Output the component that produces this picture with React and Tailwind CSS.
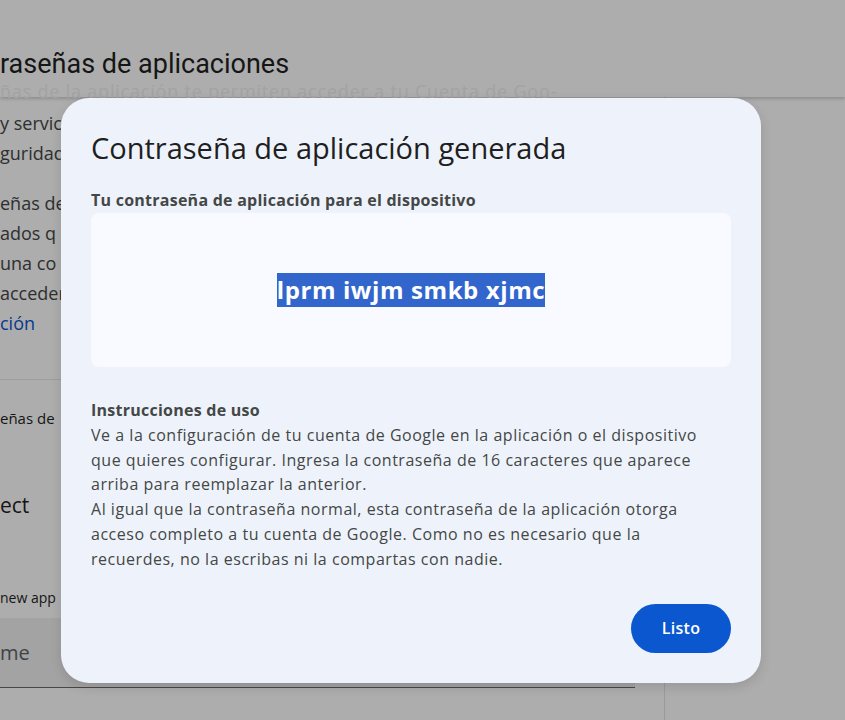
import React from 'react';

const App = () => {
  return (
    <div className="relative w-[845px] h-[720px] overflow-hidden bg-white font-['Roboto',sans-serif]">
      {/* Page behind the dialog */}
      <div className="flex flex-col h-full">
        {/* Header */}
        <div className="relative z-10 h-[97px] shrink-0 bg-white/90 shadow-[0_2px_3px_rgba(0,0,0,0.18)]">
          <div className="pt-[47px] text-[27px] leading-[34px] text-[#1f1f1f] whitespace-nowrap">
            raseñas de aplicaciones
          </div>
          <div className="text-[18px] leading-[20px] tracking-[0.8px] text-[#f0f0f0] whitespace-nowrap font-['Open_Sans',sans-serif]">
            ñas de la aplicación te permiten acceder a tu Cuenta de Goo-
          </div>
        </div>

        <div className="flex flex-1">
          <div className="w-[665px] border-r border-[#e3e3e3]">
            <div className="w-[635px] text-[18px] leading-[30px] text-[#444746] whitespace-nowrap font-['Open_Sans',sans-serif]">
              <div className="mt-[11px]">
                <div>y servic</div>
                <div>guridad</div>
              </div>
              <div className="mt-[20px]">
                <div>eñas de</div>
                <div>ados q</div>
                <div>una co</div>
                <div>acceder</div>
                <div className="text-[#0b57d0]">ción</div>
              </div>

              <div className="mt-[41px] border-t border-[#e8e8e8]" />

              <div className="mt-[28px] text-[15px] leading-[20px] text-[#1f1f1f]">eñas de</div>
              <div className="mt-[65px] text-[21px] leading-[24px] text-[#1f1f1f]">ect</div>
              <div className="mt-[71px] text-[14px] leading-[20px] text-[#1f1f1f]">new app</div>
              <div className="mt-[10px] h-[70px] bg-[#f0f0f0] border-b border-[#6b6b6b] flex items-center text-[20px] text-[#5f6368]">
                me
              </div>
            </div>
          </div>
          <div className="flex-1" />
        </div>
      </div>

      {/* Scrim */}
      <div className="absolute inset-0 z-20 bg-black/[0.32]" />

      {/* Dialog */}
      <div className="absolute z-30 left-[61px] top-[98px] w-[700px] rounded-[28px] bg-[#eef3fb] px-[30px] pt-[32px] pb-[30px] shadow-[0_4px_12px_rgba(0,0,0,0.12)] font-['Open_Sans',sans-serif]">
        <h2 className="text-[29px] leading-[36px] text-[#1f1f1f]">
          Contraseña de aplicación generada
        </h2>
        <div className="mt-[22px] text-[16px] leading-[24px] tracking-[0.25px] font-bold text-[#444746]">
          Tu contraseña de aplicación para el dispositivo
        </div>
        <div className="mt-px h-[154px] rounded-lg bg-[#f8faff] flex items-center justify-center">
          <span className="bg-[#3366cc] text-white text-[24px] leading-[34px] tracking-[0.6px] font-bold">
            lprm iwjm smkb xjmc
          </span>
        </div>

        <div className="mt-[31px] text-[16px] leading-[24.8px] tracking-[0.52px] text-[#444746] whitespace-nowrap">
          <div className="font-bold tracking-[0.25px]">Instrucciones de uso</div>
          <p>
            Ve a la configuración de tu cuenta de Google en la aplicación o el dispositivo
            <br />
            que quieres configurar. Ingresa la contraseña de 16 caracteres que aparece
            <br />
            arriba para reemplazar la anterior.
          </p>
          <p>
            Al igual que la contraseña normal, esta contraseña de la aplicación otorga
            <br />
            acceso completo a tu cuenta de Google. Como no es necesario que la
            <br />
            recuerdes, no la escribas ni la compartas con nadie.
          </p>
        </div>

        <div className="mt-[32px] flex justify-end">
          <button className="h-[49px] w-[100px] rounded-full bg-[#0b57d0] text-white text-[16px] font-semibold tracking-[0.3px]">
            Listo
          </button>
        </div>
      </div>
    </div>
  );
};

export default App;
